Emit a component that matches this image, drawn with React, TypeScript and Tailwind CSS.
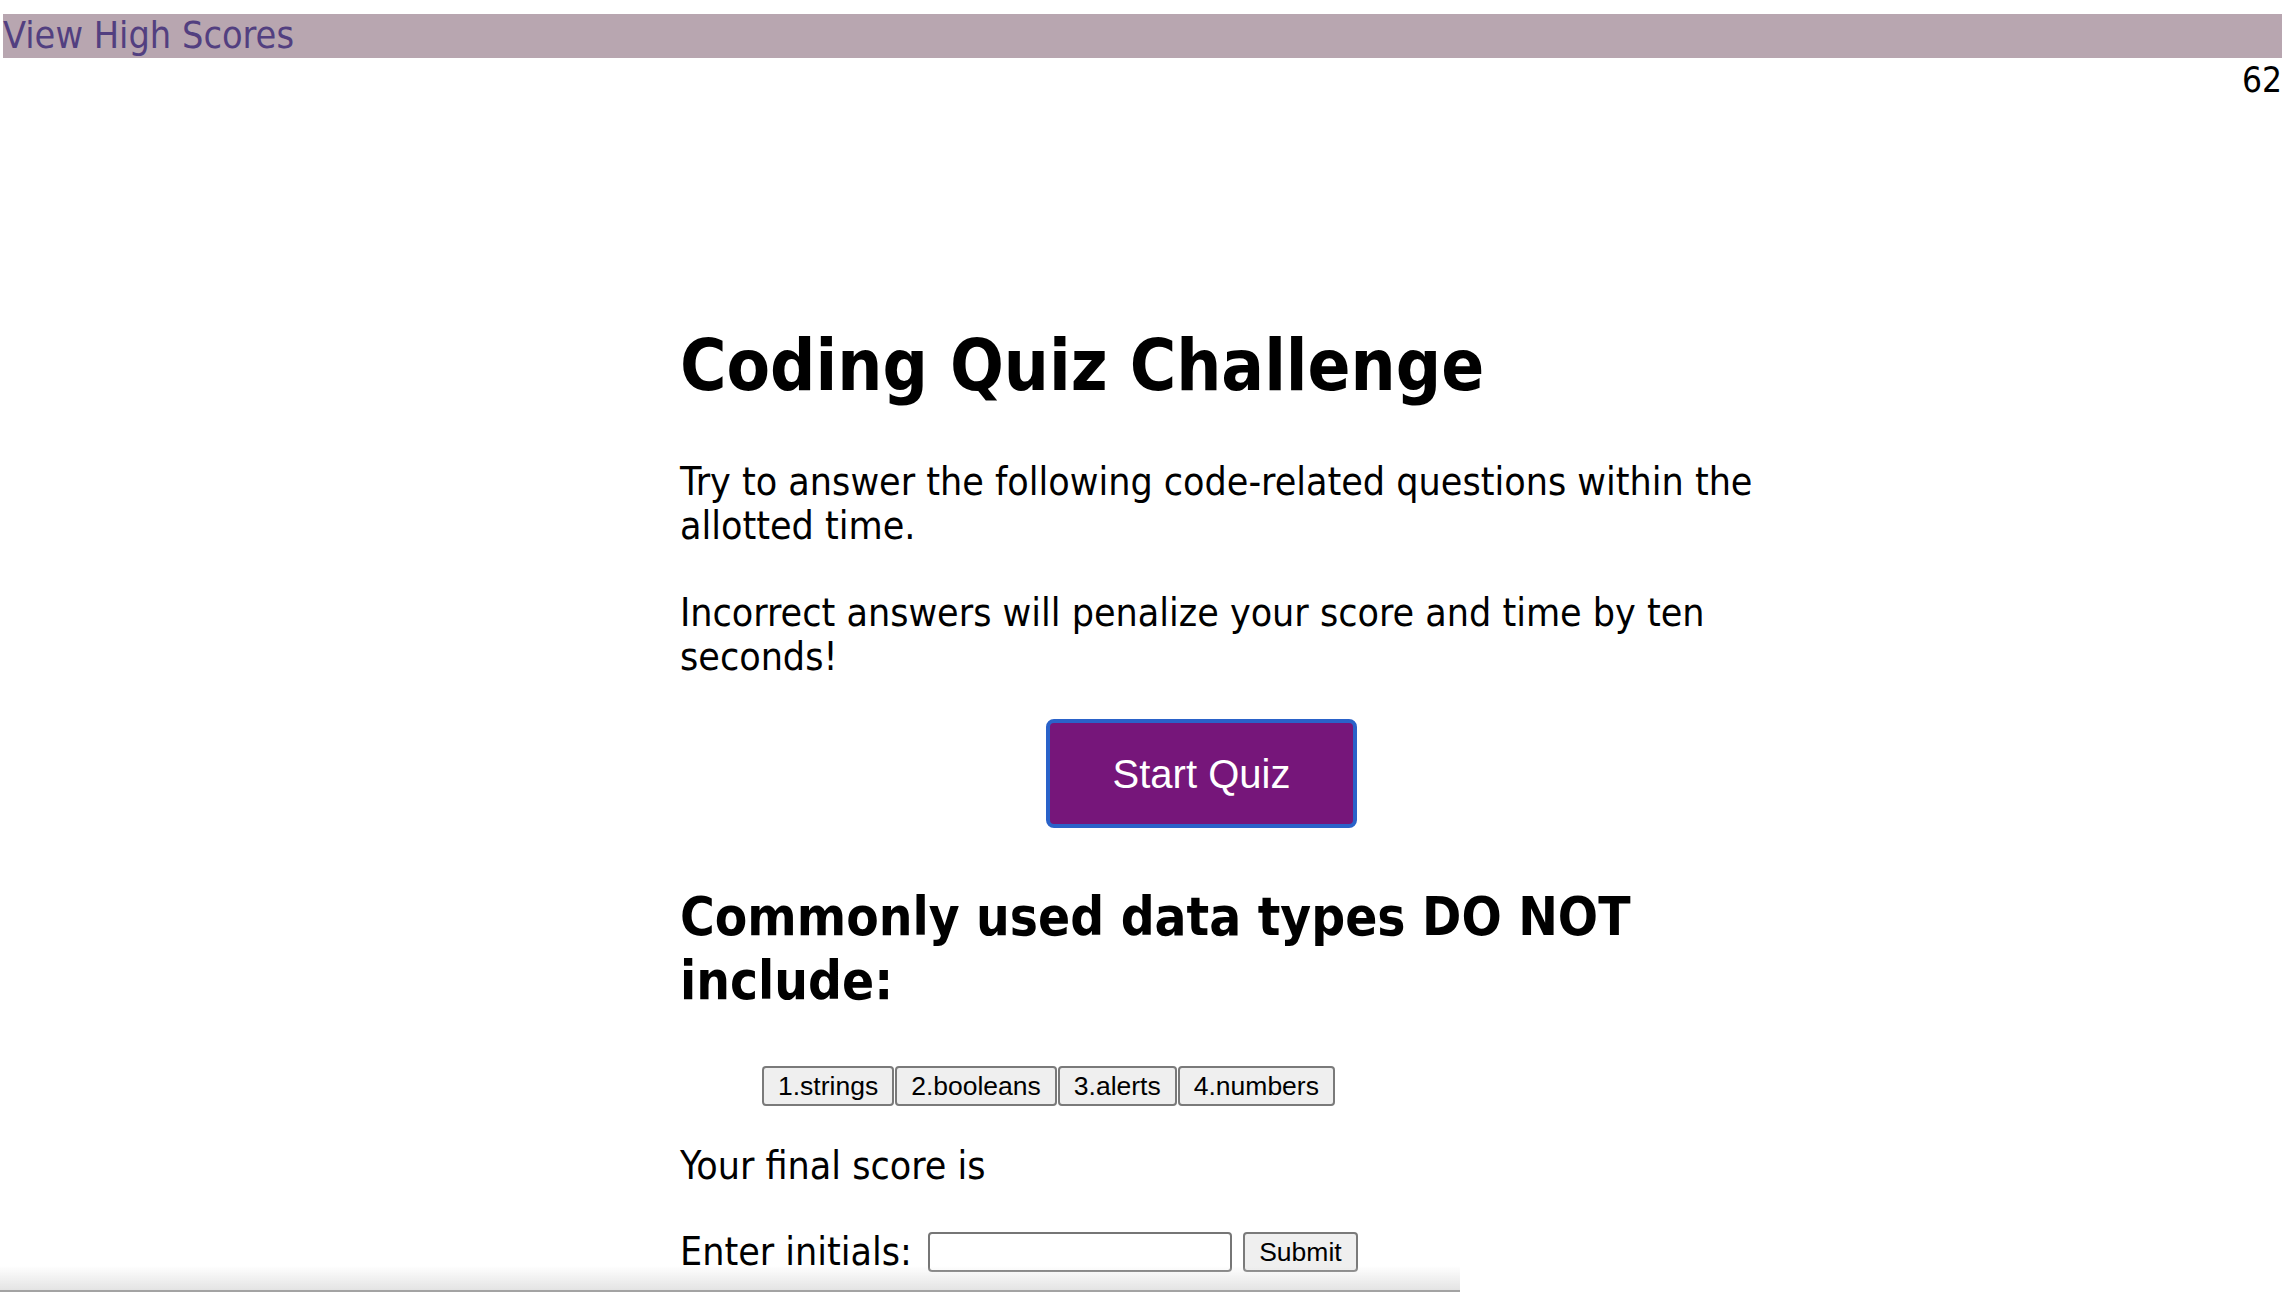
import { useState } from "react";

const ANSWERS = ["1.strings", "2.booleans", "3.alerts", "4.numbers"];

export default function App() {
  const [initials, setInitials] = useState("");

  return (
    <div className="min-h-screen bg-white text-black font-['DejaVu_Sans_Condensed','DejaVu_Sans',sans-serif]">
      {/* Header bar */}
      <header className="mt-[14px] ml-[3px] mr-[8px] h-[44px] bg-[#b8a6b0] flex items-center">
        <a href="#" className="text-[37.5px] leading-none text-[#523f80]">
          View High Scores
        </a>
      </header>
      <div className="pr-[8px] text-right text-[35px] leading-[44px]">62</div>

      <main className="ml-[680px] w-[1100px]">
        <h1 className="mt-[222px] text-[70.5px] leading-[84px] font-bold">
          Coding Quiz Challenge
        </h1>
        <p className="mt-[52px] text-[39px] leading-[44px]">
          Try to answer the following code-related questions within the allotted time.
        </p>
        <p className="mt-[43px] text-[39px] leading-[44px]">
          Incorrect answers will penalize your score and time by ten seconds!
        </p>
        <button className="mt-[40px] ml-[366px] w-[311px] h-[109px] rounded-[8px] border-4 border-[#2a62c9] bg-[#76167a] text-white text-[40px] font-['Liberation_Sans',Arial,sans-serif]">
          Start Quiz
        </button>

        <h2 className="mt-[57px] text-[52.7px] leading-[64px] font-bold">
          Commonly used data types DO NOT include:
        </h2>
        <div className="mt-[53px] ml-[82px] flex gap-[1px]">
          {ANSWERS.map((a) => (
            <button
              key={a}
              className="h-[40px] px-[14px] rounded-[4px] border-2 border-[#7a7a7a] bg-[#efefef] text-[26.5px] leading-none font-['Liberation_Sans',Arial,sans-serif]"
            >
              {a}
            </button>
          ))}
        </div>

        <p className="mt-[38px] text-[39px] leading-[44px]">Your final score is</p>
        <div className="mt-[42px] flex items-center">
          <label className="text-[39px] leading-[44px]">Enter initials:</label>
          <input
            value={initials}
            onChange={(e) => setInitials(e.target.value)}
            className="ml-[16px] w-[304px] h-[40px] rounded-[4px] border-2 border-[#767676] bg-white"
          />
          <button className="ml-[11px] w-[115px] h-[40px] rounded-[4px] border-2 border-[#7a7a7a] bg-[#efefef] text-[26.5px] leading-none font-['Liberation_Sans',Arial,sans-serif]">
            Submit
          </button>
        </div>
      </main>

      {/* bottom fade edge */}
      <div className="pointer-events-none fixed bottom-0 left-0 w-[1460px] h-[26px] bg-gradient-to-b from-transparent to-[#e4e4e4] border-b-2 border-[#a3a3a3]" />
    </div>
  );
}
